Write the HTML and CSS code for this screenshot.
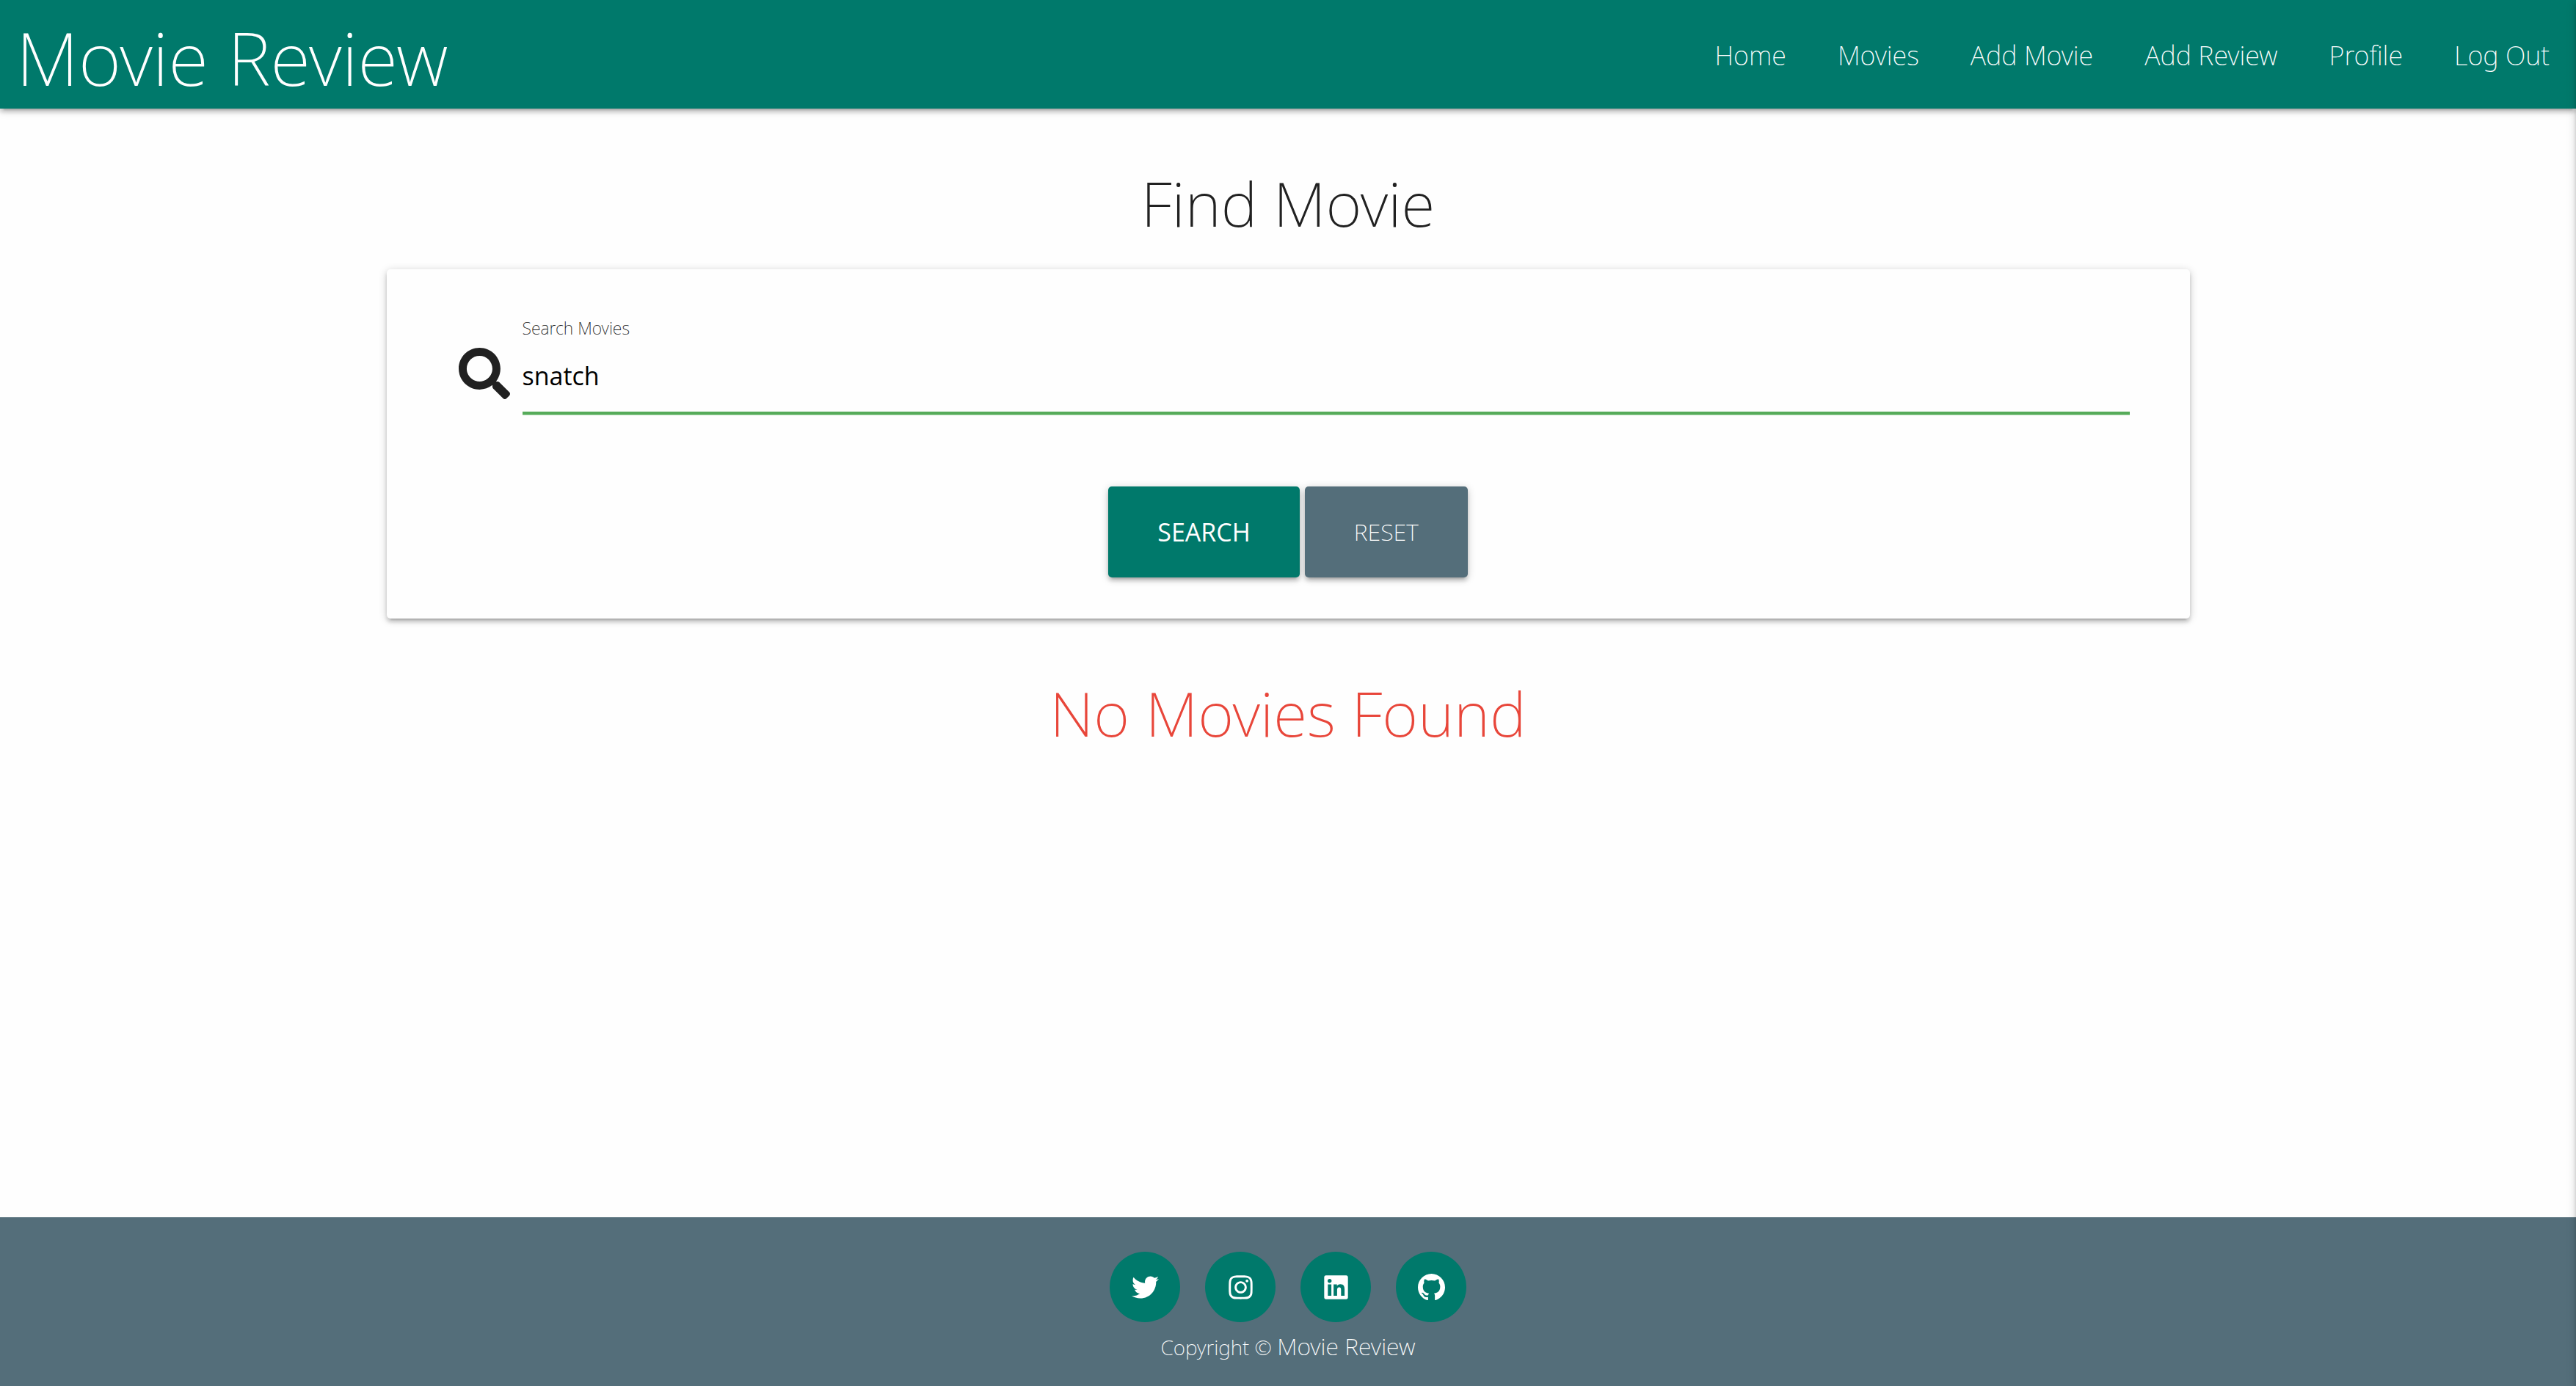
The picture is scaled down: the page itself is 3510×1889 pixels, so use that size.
FILE: index.html
```html
<!DOCTYPE html>
<html lang="en">
<head>
<meta charset="utf-8">
<meta name="viewport" content="width=device-width, initial-scale=1">
<title>Movie Review</title>
<link rel="stylesheet" href="styles.css">
</head>
<body>
<header class="header">
  <a class="logo" href="#">Movie Review</a>
  <nav class="nav">
    <a href="#">Home</a>
    <a href="#">Movies</a>
    <a href="#">Add Movie</a>
    <a href="#">Add Review</a>
    <a href="#">Profile</a>
    <a href="#">Log Out</a>
  </nav>
</header>
<div class="drawer-edge"></div>

<main class="main">
  <h1 class="heading">Find Movie</h1>
  <form class="card">
    <div class="search-row">
      <svg class="search-icon" viewBox="0 0 512 512" aria-hidden="true"><path d="M505 442.7L405.300 343c-4.500-4.500-10.600-7-17-7H372c27.600-35.300 44-79.700 44-128C416 93.100 322.900 0 208 0S0 93.100 0 208s93.100 208 208 208c48.300 0 92.700-16.400 128-44v16.300c0 6.400 2.500 12.500 7 17l99.700 99.700c9.400 9.400 24.600 9.400 33.900 0l28.300-28.300c9.400-9.400 9.400-24.600.1-34zM208 336c-70.700 0-128-57.200-128-128 0-70.700 57.200-128 128-128 70.700 0 128 57.200 128 128 0 70.700-57.200 128-128 128z"/></svg>
      <div class="field">
        <label for="query">Search Movies</label>
        <input id="query" name="query" type="text" value="snatch">
      </div>
    </div>
    <div class="actions">
      <button class="button button-search" type="submit">SEARCH</button>
      <a class="button button-reset" href="#">RESET</a>
    </div>
  </form>
  <h2 class="heading heading-empty">No Movies Found</h2>
</main>

<footer class="footer">
  <div class="social">
    <a href="#" aria-label="Twitter"><svg viewBox="0 0 512 512"><path d="M459.370 151.716c.325 4.548.325 9.097.325 13.645 0 138.720-105.583 298.558-298.558 298.558-59.452 0-114.680-17.219-161.137-47.106 8.447.974 16.568 1.299 25.340 1.299 49.055 0 94.213-16.568 130.274-44.832-46.132-.975-84.792-31.188-98.112-72.772 6.498.974 12.995 1.624 19.818 1.624 9.421 0 18.843-1.300 27.614-3.573-48.081-9.747-84.143-51.980-84.143-102.985v-1.299c13.969 7.797 30.214 12.670 47.431 13.319-28.264-18.843-46.781-51.005-46.781-87.391 0-19.492 5.197-37.360 14.294-52.954 51.655 63.675 129.300 105.258 216.365 109.807-1.624-7.797-2.599-15.918-2.599-24.040 0-57.828 46.782-104.934 104.934-104.934 30.213 0 57.502 12.670 76.670 33.137 23.715-4.548 46.456-13.320 66.599-25.340-7.798 24.366-24.366 44.833-46.132 57.827 21.117-2.273 41.584-8.122 60.426-16.243-14.292 20.791-32.161 39.308-52.628 54.253z"/></svg></a>
    <a href="#" aria-label="Instagram"><svg viewBox="-32 0 512 512"><path d="M224.100 141c-63.600 0-114.900 51.300-114.900 114.900s51.300 114.900 114.900 114.900S339 319.500 339 255.900 287.700 141 224.100 141zm0 189.600c-41.100 0-74.700-33.500-74.700-74.700s33.500-74.700 74.700-74.700 74.700 33.500 74.700 74.700-33.600 74.700-74.700 74.700zm146.400-194.300c0 14.900-12 26.800-26.800 26.800-14.900 0-26.800-12-26.800-26.800s12-26.800 26.800-26.800 26.800 12 26.800 26.800zm76.100 27.200c-1.700-35.900-9.900-67.700-36.200-93.900-26.200-26.200-58-34.400-93.900-36.200-37-2.100-147.900-2.100-184.900 0-35.800 1.700-67.600 9.900-93.900 36.100s-34.400 58-36.200 93.900c-2.100 37-2.100 147.900 0 184.900 1.700 35.900 9.900 67.700 36.200 93.900s58 34.400 93.900 36.200c37 2.100 147.900 2.100 184.900 0 35.900-1.700 67.700-9.900 93.900-36.200 26.200-26.200 34.400-58 36.200-93.900 2.100-37 2.100-147.800 0-184.800zM398.800 388c-7.800 19.600-22.900 34.700-42.600 42.600-29.500 11.700-99.500 9-132.100 9s-102.700 2.600-132.100-9c-19.600-7.800-34.700-22.900-42.600-42.600-11.700-29.500-9-99.500-9-132.100s-2.600-102.700 9-132.100c7.800-19.600 22.900-34.700 42.600-42.600 29.500-11.700 99.500-9 132.100-9s102.700-2.600 132.100 9c19.600 7.800 34.700 22.900 42.600 42.600 11.700 29.500 9 99.500 9 132.100s2.700 102.700-9 132.100z"/></svg></a>
    <a href="#" aria-label="LinkedIn"><svg viewBox="-32 0 512 512"><path d="M416 32H31.900C14.300 32 0 46.500 0 64.300v383.400C0 465.500 14.300 480 31.900 480H416c17.600 0 32-14.500 32-32.300V64.300c0-17.800-14.400-32.300-32-32.300zM135.400 416H69V202.200h66.500V416zm-33.200-243c-21.300 0-38.500-17.300-38.500-38.500S80.900 96 102.200 96c21.200 0 38.500 17.300 38.500 38.500 0 21.300-17.200 38.500-38.500 38.500zm282.100 243h-66.400V312c0-24.800-.5-56.700-34.500-56.700-34.600 0-39.900 27-39.900 54.900V416h-66.400V202.200h63.700v29.200h.9c8.900-16.800 30.600-34.500 62.900-34.500 67.200 0 79.700 44.300 79.700 101.900V416z"/></svg></a>
    <a href="#" aria-label="GitHub"><svg viewBox="0 0 16 16"><path fill-rule="evenodd" d="M8 0C3.580 0 0 3.580 0 8c0 3.540 2.290 6.530 5.470 7.590.4.070.55-.17.55-.38 0-.19-.01-.82-.01-1.490-2.010.37-2.530-.49-2.690-.94-.09-.23-.48-.94-.82-1.130-.28-.15-.68-.52-.01-.53.63-.01 1.080.58 1.230.82.72 1.210 1.870.87 2.330.66.070-.52.28-.87.51-1.070-1.780-.2-3.640-.89-3.640-3.950 0-.87.31-1.590.82-2.150-.08-.2-.36-1.020.08-2.120 0 0 .67-.21 2.200.82.64-.18 1.320-.27 2-.27s1.360.09 2 .27c1.530-1.040 2.200-.82 2.200-.82.44 1.100.16 1.920.08 2.120.51.56.82 1.270.82 2.150 0 3.070-1.870 3.750-3.650 3.950.29.25.54.73.54 1.480 0 1.070-.01 1.930-.01 2.200 0 .21.15.46.55.38A8.010 8.010 0 0 0 16 8c0-4.420-3.580-8-8-8z"/></svg></a>
  </div>
  <p class="copyright">Copyright © <a href="#">Movie Review</a></p>
</footer>
</body>
</html>
```
FILE: styles.css
```css
:root {
  --teal: #00796b;
  --slate: #546e7a;
  --ink: #212121;
  --shadow: 0 5px 5px 0 rgba(0, 0, 0, .14), 0 7px 2px -5px rgba(0, 0, 0, .12), 0 2px 12px 0 rgba(0, 0, 0, .2);
}

* {
  box-sizing: border-box;
}

body {
  display: flex;
  flex-direction: column;
  min-height: 100vh;
  margin: 0;
  overflow-x: hidden;
  background: #fefefe;
  color: var(--ink);
  font-family: "Noto Sans", sans-serif;
  font-weight: 200;
}

a {
  color: inherit;
  text-decoration: none;
}

.header {
  display: flex;
  justify-content: space-between;
  padding: 0 36px 0 22px;
  background: var(--teal);
  box-shadow: var(--shadow);
  color: #fff;
}

.logo {
  padding-top: 8px;
  font-size: 100px;
  line-height: 140px;
}

.nav {
  display: flex;
  gap: 70px;
  padding-top: 4px;
  font-size: 36px;
  line-height: 144px;
}

/* Closed side menu: only its shadow reaches into the window. */
.drawer-edge {
  position: fixed;
  top: 0;
  bottom: 0;
  left: 100%;
  width: 100px;
  box-shadow: var(--shadow);
}

.main {
  width: 70%;
  margin: 0 auto;
}

.heading {
  margin: 79px 0 40px;
  font-size: 84px;
  font-weight: 200;
  line-height: 100px;
  text-align: center;
}

.heading-empty {
  color: #e8463a;
}

.card {
  padding: 64px 0 56px;
  border-radius: 5px;
  background: #fefefe;
  box-shadow: var(--shadow);
}

.search-row {
  display: flex;
  align-items: flex-end;
  gap: 17px;
  padding: 0 82px 0 98px;
}

.search-icon {
  width: 70px;
  height: 70px;
  margin-bottom: 21px;
  fill: var(--ink);
}

.field {
  display: flex;
  flex: 1;
  flex-direction: column;
}

.field label {
  font-size: 23px;
  line-height: 32px;
}

.field input {
  height: 102px;
  padding: 0;
  border: 0;
  border-bottom: 4px solid #56ab5a;
  outline: 0;
  background: none;
  box-shadow: 0 1px 0 0 #a5d6a7;
  color: #000;
  font: 400 34px "Open Sans", sans-serif;
}

.actions {
  display: flex;
  justify-content: center;
  gap: 7px;
  margin-top: 98px;
}

.button {
  height: 124px;
  padding: 0 67px;
  border: 0;
  border-radius: 5px;
  box-shadow: var(--shadow);
  color: #fff;
  line-height: 124px;
}

.button-search {
  background: var(--teal);
  font: 400 34px "Open Sans", sans-serif;
}

.button-reset {
  background: var(--slate);
  font-size: 32px;
}

.footer {
  margin-top: auto;
  padding: 47px 0 20px;
  background: var(--slate);
  color: #fff;
}

.social {
  display: flex;
  justify-content: center;
  gap: 34px;
}

.social a {
  display: flex;
  align-items: center;
  justify-content: center;
  width: 96px;
  height: 96px;
  border-radius: 50%;
  background: var(--teal);
}

.social svg {
  width: 37px;
  height: 37px;
  fill: #fff;
}

.copyright {
  margin: 0;
  font-size: 28px;
  line-height: 66px;
  text-align: center;
}

.copyright a {
  font-size: 32px;
}
```
